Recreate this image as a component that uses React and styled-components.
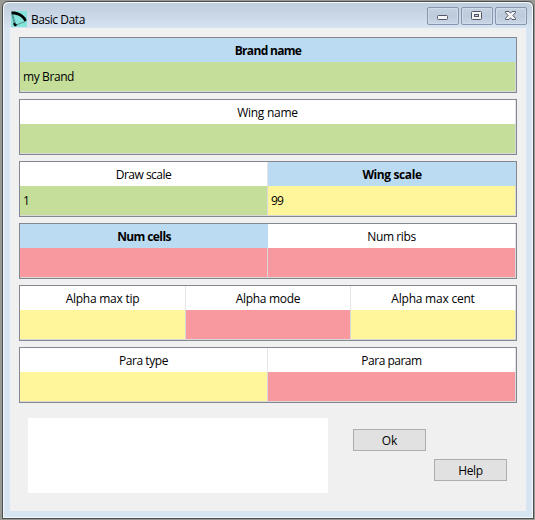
import React from "react";
import styled, { createGlobalStyle } from "styled-components";

const GlobalStyle = createGlobalStyle`
  * { box-sizing: border-box; }
  body { margin: 0; background: #989894; overflow: hidden; }
`;

const colors = {
  blue: "#bbdbf2",
  green: "#c5df9b",
  yellow: "#fff59a",
  red: "#f7999e",
  white: "#ffffff",
};

const Desktop = styled.div`
  width: 535px;
  height: 520px;
  padding: 1px 1px 1px 2px;
  background: #989894;
  font-family: "Open Sans", "Noto Sans", sans-serif;
  font-size: 12px;
  color: #000;
`;

const Window = styled.div`
  display: flex;
  flex-direction: column;
  width: 532px;
  height: 518px;
  border: 1px solid #4c4c4c;
  border-radius: 6px 6px 0 0;
  background: #f6f9fc;
  padding: 1px;
`;

const Frame = styled.div`
  flex: 1;
  display: flex;
  flex-direction: column;
  padding: 0 6px 6px;
  border-radius: 5px 5px 0 0;
  background: linear-gradient(#bfcddd 0px, #c7d5e5 10px, #d7e4f1 26px, #d7e4f1 100%);
`;

const TitleBar = styled.header`
  display: flex;
  align-items: flex-start;
  height: 25px;
  flex: none;
  margin-right: -1px;
`;

const AppIcon = styled.svg`
  width: 16px;
  height: 16px;
  margin: 8px 4px 0 1px;
  flex: none;
`;

const Title = styled.div`
  margin-top: 8px;
  line-height: 17px;
  flex: 1;
  white-space: nowrap;
`;

const Label = styled.span`
  letter-spacing: ${(p) => p.$track || 0}px;
  font-weight: ${(p) => (p.$bold ? 700 : 400)};
  white-space: nowrap;
`;

const Captions = styled.div`
  display: flex;
  gap: 2px;
  margin-top: 4px;
`;

const CaptionButton = styled.button`
  width: 32px;
  height: 18px;
  padding: 0;
  border: 1px solid #8795ae;
  border-radius: 2px;
  background: linear-gradient(#c4d1e1, #bdcbdc 50%, #c8d6e7);
  box-shadow: inset 0 0 0 1px #d0dcea;
  svg { display: block; }
`;

const Content = styled.main`
  flex: 1;
  background: #f0f0f0;
  padding: 9px 9px 0;
`;

const Tables = styled.div`
  display: flex;
  flex-direction: column;
  gap: 6px;
`;

const Table = styled.section`
  display: grid;
  grid-template-columns: ${(p) => p.$columns};
  width: 498px;
  height: 56px;
  border: 1px solid #828790;
`;

const Column = styled.div`
  display: flex;
  flex-direction: column;
`;

const HeaderCell = styled.div`
  height: 24px;
  line-height: 26px;
  text-align: center;
  background: ${(p) => (p.$key ? colors.blue : colors.white)};
  border-right: ${(p) => (p.$key ? 0 : 1)}px solid #e5e5e5;
`;

const ValueCell = styled.div`
  height: 30px;
  padding-left: 3px;
  line-height: 29px;
  background: ${(p) => colors[p.$tone]};
  border-right: 1px solid #d9d9d9;
  border-bottom: 1px solid #d9d9d9;
`;

const Footer = styled.footer`
  display: flex;
  padding: 15px 0 0 9px;
`;

const MessageBox = styled.div`
  width: 300px;
  height: 75px;
  background: #fff;
`;

const Actions = styled.div`
  display: flex;
  align-items: flex-start;
  gap: 8px;
  padding: 11px 0 0 25px;
`;

const PushButton = styled.button`
  width: 73px;
  height: 22px;
  margin-top: ${(p) => p.$drop || 0}px;
  padding: 1px 0 0;
  border: 1px solid #adadad;
  background: #e1e1e1;
  color: #000;
  font: inherit;
  line-height: 19px;
`;

const tables = [
  { columns: "496px", cells: [{ label: "Brand name", track: -0.68, isKey: true, tone: "green", value: "my Brand", valueTrack: -0.4 }] },
  { columns: "496px", cells: [{ label: "Wing name", track: -0.25, tone: "green" }] },
  {
    columns: "248px 248px",
    cells: [
      { label: "Draw scale", track: -0.52, tone: "green", value: "1" },
      { label: "Wing scale", track: -0.4, isKey: true, tone: "yellow", value: "99", valueTrack: -0.8 },
    ],
  },
  {
    columns: "248px 248px",
    cells: [
      { label: "Num cells", track: -0.6, isKey: true, tone: "red" },
      { label: "Num ribs", track: -0.4, tone: "red" },
    ],
  },
  {
    columns: "166px 165px 165px",
    cells: [
      { label: "Alpha max tip", track: -0.25, tone: "yellow" },
      { label: "Alpha mode", track: -0.3, tone: "red" },
      { label: "Alpha max cent", track: -0.22, tone: "yellow" },
    ],
  },
  {
    columns: "248px 248px",
    cells: [
      { label: "Para type", track: -0.45, tone: "yellow" },
      { label: "Para param", track: -0.5, tone: "red" },
    ],
  },
];

export default function App() {
  return (
    <>
      <GlobalStyle />
      <Desktop>
        <Window>
          <Frame>
            <TitleBar>
              <AppIcon viewBox="0 0 16 16">
                <rect width="16" height="16" fill="#86e3dc" />
                <path d="M0.3 0.6C3 0.2 6 0.8 9 2.2C12.5 4 15 6.5 15.7 9.3L13.8 10.8C12.3 7.8 9.5 5.3 6.5 4.2C4.5 3.6 2.5 3.4 0.8 3.8Z" fill="#000" />
                <path d="M1 3.5L3 13M14 10.6L5 14M1.8 4L4.2 12" stroke="#2c5c58" strokeWidth="0.6" fill="none" />
                <path d="M2.2 12.4L4.2 11.4L4.8 13.2L6.6 13.8L4.4 15.4L2.8 14.4Z" fill="#000" />
              </AppIcon>
              <Title><Label $track={-0.45}>Basic Data</Label></Title>
              <Captions>
                <CaptionButton aria-label="Minimize">
                  <svg width="30" height="16">
                    <rect x="9.5" y="7.5" width="10" height="4" rx="1" fill="#f5f5f5" stroke="#535666" />
                  </svg>
                </CaptionButton>
                <CaptionButton aria-label="Maximize">
                  <svg width="30" height="16">
                    <rect x="9.5" y="3.5" width="10" height="8" rx="1" fill="#f5f5f5" stroke="#535666" />
                    <rect x="12.5" y="6.5" width="4" height="2" fill="#c3d0e0" stroke="#535666" />
                  </svg>
                </CaptionButton>
                <CaptionButton aria-label="Close">
                  <svg width="30" height="16">
                    <path
                      d="M9.5 3.5H13L14.5 5.2L16 3.5H19.5V4.7L16.9 7.5L19.5 10.3V11.5H16L14.5 9.8L13 11.5H9.5V10.3L12.1 7.5L9.5 4.7Z"
                      fill="#f5f5f5"
                      stroke="#535666"
                      strokeLinejoin="round"
                    />
                  </svg>
                </CaptionButton>
              </Captions>
            </TitleBar>
            <Content>
              <Tables>
                {tables.map((table, i) => (
                  <Table key={i} $columns={table.columns}>
                    {table.cells.map((cell) => (
                      <Column key={cell.label}>
                        <HeaderCell $key={cell.isKey}>
                          <Label $bold={cell.isKey} $track={cell.track}>{cell.label}</Label>
                        </HeaderCell>
                        <ValueCell $tone={cell.tone}>
                          {cell.value && <Label $track={cell.valueTrack}>{cell.value}</Label>}
                        </ValueCell>
                      </Column>
                    ))}
                  </Table>
                ))}
              </Tables>
              <Footer>
                <MessageBox />
                <Actions>
                  <PushButton>Ok</PushButton>
                  <PushButton $drop={30}><Label $track={-0.4}>Help</Label></PushButton>
                </Actions>
              </Footer>
            </Content>
          </Frame>
        </Window>
      </Desktop>
    </>
  );
}
